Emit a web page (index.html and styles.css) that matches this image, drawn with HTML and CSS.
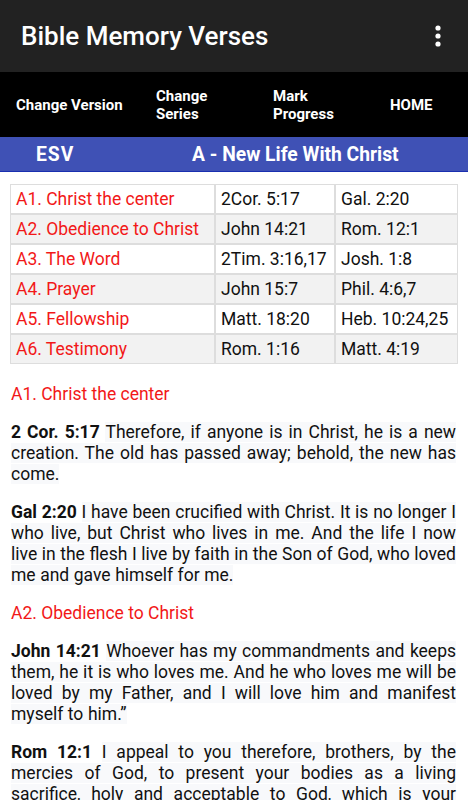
FILE: index.html
```html
<!DOCTYPE html>
<html lang="en">
<head>
  <meta charset="UTF-8">
  <meta name="viewport" content="width=device-width, initial-scale=1.0">
  <title>Bible Memory Verses</title>
  <link rel="stylesheet" href="styles.css">
</head>
<body>
  <header class="appbar">
    <h1>Bible Memory Verses</h1>
    <svg class="menu" width="8" height="24" viewBox="0 0 8 24">
      <circle cx="4" cy="4" r="2.6" fill="#fff"/>
      <circle cx="4" cy="12" r="2.6" fill="#fff"/>
      <circle cx="4" cy="20" r="2.6" fill="#fff"/>
    </svg>
  </header>

  <nav class="topnav">
    <a href="#">Change Version</a>
    <a href="#">Change<br>Series</a>
    <a href="#">Mark<br>Progress</a>
    <a href="#">HOME</a>
  </nav>

  <div class="series-bar">
    <span class="version">ESV</span>
    <span class="series">A - New Life With Christ</span>
  </div>

  <div class="table-wrap">
    <table class="verses">
      <colgroup>
        <col class="c-topic">
        <col class="c-ref">
        <col>
      </colgroup>
      <tr><td class="topic">A1. Christ the center</td><td>2Cor. 5:17</td><td>Gal. 2:20</td></tr>
      <tr><td class="topic">A2. Obedience to Christ</td><td>John 14:21</td><td>Rom. 12:1</td></tr>
      <tr><td class="topic">A3. The Word</td><td>2Tim. 3:16,17</td><td>Josh. 1:8</td></tr>
      <tr><td class="topic">A4. Prayer</td><td>John 15:7</td><td>Phil. 4:6,7</td></tr>
      <tr><td class="topic">A5. Fellowship</td><td>Matt. 18:20</td><td>Heb. 10:24,25</td></tr>
      <tr><td class="topic">A6. Testimony</td><td>Rom. 1:16</td><td>Matt. 4:19</td></tr>
    </table>
  </div>

  <main class="content">
    <h2>A1. Christ the center</h2>
    <p><b>2 Cor. 5:17</b> <span>Therefore, if anyone is in Christ, he is a new creation. The old has passed away; behold, the new has come.</span></p>
    <p><b>Gal 2:20</b> <span>I have been crucified with Christ. It is no longer I who live, but Christ who lives in me. And the life I now live in the flesh I live by faith in the Son of God, who loved me and gave himself for me.</span></p>

    <h2>A2. Obedience to Christ</h2>
    <p><b>John 14:21</b> <span>Whoever has my commandments and keeps them, he it is who loves me. And he who loves me will be loved by my Father, and I will love him and manifest myself to him.&rdquo;</span></p>
    <p><b>Rom 12:1</b> <span>I appeal to you therefore, brothers, by the mercies of God, to present your bodies as a living sacrifice, holy and acceptable to God, which is your spiritual worship.</span></p>
  </main>
</body>
</html>
```

FILE: styles.css
```css
body {
  margin: 0;
  font-family: Roboto, "Noto Sans", sans-serif;
  background-color: #fff;
  color: #111;
}
.appbar {
  height: 72px;
  background-color: #222;
  display: flex;
  align-items: center;
  justify-content: space-between;
  padding: 0 26px 0 21px;
}
.appbar h1 {
  margin: 0;
  color: #fff;
  font-size: 26px;
  font-weight: 500;
}
.topnav {
  height: 65px;
  background-color: #000;
  display: grid;
  grid-template-columns: 140px 117px 117px 1fr;
  align-items: center;
  padding-left: 16px;
}
.topnav a {
  color: #fff;
  font-weight: bold;
  font-size: 15px;
  line-height: 18px;
  text-decoration: none;
}
.series-bar {
  height: 34px;
  background-color: #3f51b5;
  border-bottom: 1px solid #1a2fb0;
  display: flex;
  align-items: center;
  color: #fff;
  font-weight: bold;
  font-size: 19.3px;
}
.version {
  margin-left: 36px;
  width: 156px;
  letter-spacing: 1px;
}
.table-wrap {
  padding: 12px 10px 0;
}
.verses {
  width: 100%;
  table-layout: fixed;
  border-collapse: separate;
  border-spacing: 0;
  font-size: 17.5px;
}
.verses .c-topic { width: 205px; }
.verses .c-ref { width: 120px; }
.verses td {
  border: 1px solid #ddd;
  height: 28px;
  padding: 0 5px;
  white-space: nowrap;
  overflow: hidden;
}
.verses tr:nth-child(even) td {
  background-color: #f2f2f2;
}
.verses .topic {
  color: #f21818;
}
.content {
  padding: 20px 12px 0 11px;
  font-size: 17.5px;
  line-height: 21px;
}
.content h2 {
  margin: 0 0 17px;
  font-size: 17.5px;
  font-weight: normal;
  color: #f21818;
}
.content p {
  margin: 0 0 17px;
  word-spacing: 0.2px;
  text-align: justify;
}
.content p span {
  background-color: #f8f9fb;
}
```
